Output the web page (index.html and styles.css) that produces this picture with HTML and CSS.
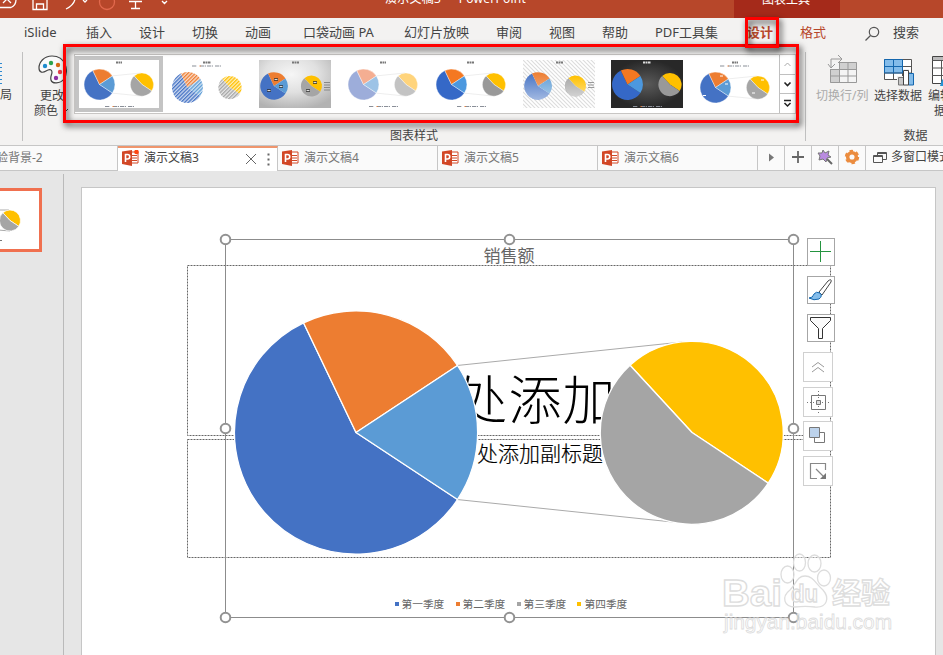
FILE: index.html
```html
<!DOCTYPE html>
<html lang="zh-CN">
<head>
<meta charset="utf-8">
<title>演示文稿3 - PowerPoint</title>
<link rel="stylesheet" href="styles.css">
</head>
<body>
<svg class="defs" width="0" height="0">
  <defs>
    <g id="main-pie">
      <path fill="var(--blue)" d="M0 0L101.500 67A121.600 121.600 0 1 1 -52.500 -109.700Z"/>
      <path fill="var(--orange)" d="M0 0L-52.500 -109.700A121.600 121.600 0 0 1 101.500 -67Z"/>
      <path fill="var(--sky)" d="M0 0L101.500 -67A121.600 121.600 0 0 1 101.500 67Z"/>
    </g>
    <g id="sub-pie">
      <path fill="var(--gold)" d="M0 0L-62 -67.200A91.500 91.500 0 0 1 76.200 50.600Z"/>
      <path fill="var(--gray)" d="M0 0L76.200 50.600A91.500 91.500 0 1 1 -62 -67.200Z"/>
    </g>
    <g id="pies">
      <use href="#main-pie" transform="translate(16.500 24.500) scale(.127)"/>
      <use href="#sub-pie" transform="translate(59 24.500) scale(.127)"/>
    </g>
    <g id="pair">
      <path d="M30 15.800L58 13M30 33.200L58 36" stroke="#ddd" stroke-width=".5"/>
      <use href="#pies" stroke="#fff" stroke-width="3"/>
    </g>
    <g id="keys" fill="none" stroke-width="1.200">
      <path d="M0 0h5M8 0h6M15 0h6M23 0h6" stroke="#8a8f98" stroke-dasharray="4 .7"/>
      <path d="M7.500 0h1.200" stroke="#ed7d31"/>
    </g>
    <radialGradient id="silver" cx=".45" cy=".3" r=".75"><stop offset="0" stop-color="#f6f6f6"/><stop offset=".5" stop-color="#e0e0e0"/><stop offset="1" stop-color="#b2b2b2"/></radialGradient>
    <radialGradient id="dark"><stop offset="0" stop-color="#5a5a5a"/><stop offset="1" stop-color="#282828"/></radialGradient>
    <linearGradient id="shine" x2="0" y2="1"><stop offset="0" stop-color="#fff" stop-opacity="0"/><stop offset="1" stop-color="#fff" stop-opacity=".5"/></linearGradient>
    <pattern id="stripes" width="2.600" height="2.600" patternUnits="userSpaceOnUse" patternTransform="rotate(45)"><path d="M0 0H1.300V2.600H0Z" fill="#fff"/></pattern>
    <mask id="striped" maskUnits="userSpaceOnUse" x="0" y="0" width="72" height="48"><path fill="url(#stripes)" d="M0 0h72v48H0z"/></mask>
    <pattern id="diag" width="4" height="4" patternUnits="userSpaceOnUse"><path d="M-1 -1L5 5M-1 3L1 5M3 -1L5 1" stroke="#ddd" stroke-width="1.200"/></pattern>
    <g id="ppt">
      <path d="M7 2h9v11H7z" fill="#fff" stroke="#d24726"/>
      <path d="M10 5.500h5M10 8h5M10 10.500h5" stroke="#d24726"/>
      <path d="M0 1.500L10 0v16L0 14z" fill="#d24726"/>
      <path d="M3.500 12V4.500h2a2 2 0 0 1 0 4.500h-2" fill="none" stroke="#fff" stroke-width="1.600"/>
    </g>
  </defs>
</svg>

<header class="titlebar">
  <svg class="quick" width="180" height="18" fill="none" stroke="#fff" stroke-width="1.300">
    <path d="M0 7.500h11q5-2 5-8M3 3l4-4 4 4M33 0v9.500h14V0M36.500 9V4h7v5M66 9q8-4 9-10M83 0l2 2 2-2M129 1.500h13M135.500 1.500v7M131 8.500h9M162 1l2.500 2.500L167 1"/>
    <circle cx="107" cy="2" r="7.500" stroke="#e2694d"/>
  </svg>
  <span class="doc-title">演示文稿3&nbsp; - &nbsp;PowerPoint</span>
  <span class="context">图表工具</span>
</header>

<nav class="tabs">
  <span>iSlide</span><span>插入</span><span>设计</span><span>切换</span><span>动画</span><span>口袋动画 PA</span><span>幻灯片放映</span><span>审阅</span><span>视图</span><span>帮助</span><span>PDF工具集</span><span class="current">设计</span><span class="accent">格式</span>
  <svg width="16" height="18" fill="none" stroke="#555" stroke-width="1.200"><circle cx="9" cy="7" r="4.700"/><path d="M5.500 10.500L.5 15.500"/></svg>
  <span>搜索</span>
</nav>

<section class="ribbon">
  <div class="group layout-group">
    <svg width="3" height="24" stroke="#2e8ad0"><path d="M0 1.500h2M0 5.500h2M0 9.500h2M0 13.500h2M0 17.500h2M0 21.500h2"/></svg>
    <span>局</span>
  </div>
  <div class="group styles-group">
    <div class="tools">
      <div class="recolor">
        <svg width="29" height="30" viewBox="0 0 29 30"><path d="M14 1C6 1 1 7 1 13c0 5 4 5 7 3s6-2 6 1c0 3-2 4-1 8 1 4 9 4 13-1 5-8 2-23-12-23z" fill="#fafafa" stroke="#444" stroke-width="1.200"/><circle cx="7" cy="11" r="2.200" fill="#1e8bcd"/><circle cx="13" cy="8" r="2.200" fill="#2da44e"/><circle cx="20" cy="10" r="2.200" fill="#d66b13"/><circle cx="22" cy="17" r="2.200" fill="#e8414b"/><circle cx="18" cy="23" r="2.200" fill="#8e2fa3"/></svg>
        <span>更改</span><span>颜色<svg class="caret" width="7" height="5"><path d="M1 1l2.500 2.500L6 1" fill="none" stroke="#444"/></svg></span>
      </div>
      <div class="gallery">
        <div class="item selected"><svg viewBox="0 0 72 48"><use href="#pair"/><path class="cap" d="M33 2.500h6"/><use href="#keys" x="22" y="46.500"/></svg></div>
        <div class="item"><svg viewBox="0 0 72 48">
          <g class="tint"><use href="#pies" y="3"/></g>
          <g mask="url(#striped)"><use href="#pies" y="3"/></g>
          <path class="cap" d="M32 2.500h8"/><use href="#keys" x="21" y="6"/></svg></div>
        <div class="item"><svg viewBox="0 0 72 48"><path fill="url(#silver)" d="M0 0h72v48H0z"/><use href="#main-pie" transform="translate(15 26) scale(.113)"/><use href="#sub-pie" transform="translate(52.500 26) scale(.115)"/><path class="cap" d="M33 2.500h7"/><path d="M15 19.500h4M20 26.500h4M8 30.500h4M54 22.500h4M47 30.500h4" stroke="#333" stroke-width="2.500"/><path d="M15.500 19.500h3M20.500 26.500h3M8.500 30.500h3M54.500 22.500h3M47.500 30.500h3" stroke="#ddd"/><path d="M65 22.500h6M65 25h6M65 27.500h6M65 30h6" stroke="#888"/></svg></div>
        <div class="item pale"><svg viewBox="0 0 72 48"><use href="#pair"/><path class="cap" d="M33 2.500h6"/><use href="#keys" x="22" y="46.500"/></svg></div>
        <div class="item vivid"><svg viewBox="0 0 72 48"><use href="#pair"/><path class="cap" d="M32 2.500h7"/><use href="#keys" x="22" y="46.500"/></svg></div>
        <div class="item"><svg viewBox="0 0 72 48"><path fill="url(#diag)" d="M0 0h72v48H0z"/><use href="#main-pie" transform="translate(15 26) scale(.113)"/><use href="#sub-pie" transform="translate(52.500 26) scale(.115)"/><circle cx="15" cy="26" r="13.800" fill="url(#shine)"/><circle cx="52.500" cy="26" r="10.500" fill="url(#shine)"/><path class="cap" d="M33 2.500h7"/><path d="M65 22.500h6M65 25h6M65 27.500h6" stroke="#999"/></svg></div>
        <div class="item vivid"><svg viewBox="0 0 72 48"><path fill="url(#dark)" d="M0 0h72v48H0z"/><use href="#pies"/><path class="cap light" d="M32 2.500h8"/><use href="#keys" x="22" y="46.500"/></svg></div>
        <div class="item"><svg viewBox="0 0 72 48"><use href="#pair" y="3"/><path class="cap" d="M33 2.500h6"/><use href="#keys" x="21" y="6"/><path d="M4 35.500h3M26 24h3M21 16h3M62 20h3M53 33h3" stroke="#fff"/></svg></div>
        <div class="scroller">
          <svg width="15" height="20"><path d="M4.500 11L7.500 8l3 3" stroke="#aaa"/></svg>
          <svg width="15" height="19"><path d="M4.500 7.500l3 3 3-3" stroke="#222" stroke-width="1.600"/></svg>
          <svg width="15" height="19"><path d="M4 6.500h7M4.500 9l3 3 3-3" stroke="#222" stroke-width="1.500"/></svg>
        </div>
      </div>
    </div>
    <div class="label">图表样式</div>
  </div>
  <div class="group data-group">
    <div class="data-tools">
      <div class="tool disabled"><svg width="36" height="32" viewBox="0 0 36 32" fill="none"><path d="M5 8h27v21H5z" fill="#f4f4f4"/><path d="M14 8h18v7H14zM5 15h9v14H5z" fill="#d0d0d0"/><path d="M14 8.500h17.500v20h-26V15M5.500 15.500h26M5.500 22h26M14.500 8.500v20M23 8.500v20" stroke="#999"/><path d="M6 13V5h10M3 10l3 4 4-4M13 1l4 4-4 4" stroke="#999"/></svg><span>切换行/列</span></div>
      <div class="tool"><svg width="32" height="32" viewBox="0 0 32 32"><path d="M1.500 5.500h27v20h-27z" fill="#fff" stroke="#555"/><path d="M1.500 5.500h18v13.500h-18z" fill="#83bcea"/><path d="M1.500 12.500h27M1.500 19h27M10.500 5v20M19.500 5v20" stroke="#555"/><path d="M1.500 5.500h18v13.500h-18zM1.500 12.500h18M10.500 5v14" stroke="#1467ae" fill="none"/><path d="M14 22h9v10h-9zM20 15h6v17h-6z" fill="#f1f0ef"/><path d="M15.500 23.500h5v7.500h-5z" fill="#c8c8c8" stroke="#777"/><path d="M25.500 19.500h5v11.500h-5z" fill="#83bcea" stroke="#1467ae"/><path d="M20.500 16.500h5v14.500h-5z" fill="#fff" stroke="#444"/></svg><span>选择数据</span></div>
      <div class="tool edit"><svg width="14" height="32" viewBox="0 0 14 32"><path d="M.5 2.500h14v27H.5z" fill="#fff" stroke="#444"/><path d="M1 3h13v3H1z" fill="#bbb"/><path d="M0 6.500h14M0 14h14M0 21.500h14M9.500 6v24" stroke="#555"/><path d="M8 32l2-6 4-4v10z" fill="#2494d5"/></svg><span>编辑数</span><span class="second">据</span></div>
    </div>
    <div class="label">数据</div>
  </div>
</section>

<div class="doctabs">
  <div class="doc first">验背景-2</div>
  <div class="doc active"><svg width="18" height="17"><use href="#ppt"/><circle cx="14.500" cy="2" r="2.300" fill="#ff4612"/></svg><span>演示文稿3</span><svg class="close" width="28" height="14" fill="none" stroke="#666"><path d="M1 2l10 10M11 2L1 12"/><path d="M23.500 1.500v12" stroke-width="2" stroke-dasharray="2 3"/></svg></div>
  <div class="doc"><svg width="18" height="17"><use href="#ppt"/></svg><span>演示文稿4</span></div>
  <div class="doc"><svg width="18" height="17"><use href="#ppt"/></svg><span>演示文稿5</span></div>
  <div class="doc"><svg width="18" height="17"><use href="#ppt"/></svg><span>演示文稿6</span></div>
  <div class="mini"><svg width="16" height="16"><path d="M6 4.500l5 4-5 4z" fill="#777"/></svg></div>
  <div class="mini"><svg width="16" height="16"><path d="M2 8h12M8 2v12" stroke="#666" stroke-width="1.800"/></svg></div>
  <div class="mini"><svg width="16" height="16"><path d="M6 1l2 3 4-2-1 4 3 2-4 1-1 4-3-3-4 1 1-4-2-3 4 0z" fill="#b98be0" stroke="#777"/><path d="M10 10l5 5" stroke="#666" stroke-width="2"/></svg></div>
  <div class="mini"><svg width="16" height="16"><circle cx="8" cy="8" r="4.300" fill="none" stroke="#eb8c3f" stroke-width="3.500"/><circle cx="8" cy="8" r="6.200" fill="none" stroke="#eb8c3f" stroke-width="2" stroke-dasharray="3.500 3"/></svg></div>
  <div class="multi"><svg width="15" height="14" fill="none" stroke="#555"><path d="M4.500 4V1.500h9v7H10M.5 4.500h9v7h-9zM1 5.500h8M5 2.500h8"/></svg><span>多窗口模式</span></div>
</div>

<main class="workspace">
  <aside class="side"><div class="slide-thumb"><svg width="39" height="58" viewBox="0 191 39 58"><path d="M-4 210l13 0M-2 230l12 1" stroke="#aaa"/><use href="#sub-pie" stroke="#fff" stroke-width="6" transform="translate(10 220.500) scale(.115)"/><path d="M0 240.500h2" stroke="#777"/></svg></div></aside>
  <div class="slide">
    <svg class="canvas" width="853" height="467" viewBox="82 188 853 467">
      <g fill="none" stroke="#666" stroke-dasharray="2 1"><path d="M187.500 265.500H830.500V435.500H187.500ZM187.500 439.500H830.500V557.500H187.500Z"/></g>
      <text class="headline" x="454.500" y="420">处添加</text>
      <text class="subline" x="477" y="461">处添加副标题</text>
      <path d="M457 365.500L682 342M457 499.500L682 523" stroke="#aaa"/>
      <g stroke="#fff" stroke-width="1.300" stroke-linejoin="round"><use href="#main-pie" x="356" y="432.500"/><use href="#sub-pie" x="692" y="432.500"/></g>
      <text class="chart-title" x="483.500" y="262">销售额</text>
      <g class="legend"><path fill="#4472c4" d="M395 602h4v4h-4z"/><path fill="#ed7d31" d="M456 602h4v4h-4z"/><path fill="#a5a5a5" d="M517 602h4v4h-4z"/><path fill="#ffc000" d="M577 602h4v4h-4z"/>
        <text x="401.500" y="608">第一季度</text><text x="462.500" y="608">第二季度</text><text x="523.500" y="608">第三季度</text><text x="584.500" y="608">第四季度</text></g>
      <path d="M225.500 239.500H793.500V617.500H225.500Z" fill="none" stroke="#8c8c8c"/>
      <g fill="#fff" stroke="#929292" stroke-width="2"><circle cx="225.500" cy="239.500" r="4.800"/><circle cx="509.500" cy="239.500" r="4.800"/><circle cx="793.500" cy="239.500" r="4.800"/><circle cx="225.500" cy="428.500" r="4.800"/><circle cx="793.500" cy="428.500" r="4.800"/><circle cx="225.500" cy="617.500" r="4.800"/><circle cx="509.500" cy="617.500" r="4.800"/><circle cx="793.500" cy="617.500" r="4.800"/></g>
      <g class="mark">
        <ellipse cx="787.500" cy="574.500" rx="6.500" ry="8.500"/><ellipse cx="799.500" cy="562.500" rx="6" ry="8.500"/><ellipse cx="814.500" cy="563.500" rx="6.500" ry="8.500"/><ellipse cx="824" cy="578" rx="6.500" ry="8"/>
        <path d="M805 576c-8 0-9 8-15 14-9 7-6 17 5 17 8-1 13-1 20 0 12 1 15-9 8-17-7-6-10-14-18-14z"/>
        <text x="722" y="606" class="brand" textLength="60" lengthAdjust="spacingAndGlyphs">Bai</text><text x="791" y="602" class="du" textLength="27" lengthAdjust="spacingAndGlyphs">du</text><text x="832" y="604" class="jy">经验</text><text x="724" y="629" class="url" textLength="168" lengthAdjust="spacingAndGlyphs">jingyan.baidu.com</text>
      </g>
    </svg>
    <div class="chart-tools">
      <svg width="28" height="28"><path d="M3 13.500h21M13.500 3v21" stroke="#259440"/></svg>
      <svg width="28" height="28"><path d="M12 16L21 5q4-3 3 1L15 19z" fill="#fff" stroke="#444"/><path d="M2 22q4 0 5-4 2-3 6-1 3 3-1 6-5 2-10-1z" fill="#83bcea" stroke="#1467ae"/></svg>
      <svg width="28" height="28"><path d="M3.500 3.500h20v3l-8 8v10h-4v-10l-8-8z" fill="#fafafa" stroke="#333"/></svg>
    </div>
    <div class="float-tools">
      <svg width="30" height="30"><path d="M9 15l6-4.500 6 4.500M9 20l6-4.500 6 4.500" stroke="#999"/></svg>
      <svg width="30" height="30"><path d="M8.500 8.500h14v14h-14z" stroke="#777"/><path d="M15.500 4v24M4 15.500h24" stroke="#777" stroke-dasharray="1 2"/><path d="M13.500 13.500h4v4h-4z" fill="#ddd" stroke="#777"/></svg>
      <svg width="30" height="30"><path d="M17 11.500h4.500v10h-10V17" stroke="#777"/><path d="M6.500 6.500h10v10h-10z" fill="#bdd3ec" stroke="#777"/></svg>
      <svg width="30" height="30"><path d="M14 22.500H7.500v-15h15V14M13 13l8 8" stroke="#888" stroke-width="1.200"/><path d="M23 17v6h-6z" fill="#777"/></svg>
    </div>
  </div>
</main>
<div class="callout gallery-callout"></div>
<div class="callout tab-callout"></div>
</body>
</html>
```

FILE: styles.css
```css
:root {
  --blue: #4472c4;
  --orange: #ed7d31;
  --sky: #5b9bd5;
  --gold: #ffc000;
  --gray: #a5a5a5;
}
* { box-sizing: border-box; }
body {
  margin: 0;
  width: 943px;
  height: 655px;
  overflow: hidden;
  position: relative;
  background: #f3f2f1;
  color: #444;
  font: 12px/16px "Noto Sans", "Noto Sans CJK SC", sans-serif;
  white-space: nowrap;
}
svg { display: block; flex: none; }
.defs { position: absolute; }

.titlebar {
  display: grid;
  grid-template-columns: 385px 349px 106px;
  height: 18px;
  overflow: hidden;
  background: #b7472a;
  color: #fff;
}
.doc-title, .context { line-height: 14px; margin-top: -8px; }
.doc-title { letter-spacing: .25px; }
.context { margin: 0; background: #a52a1a; padding-left: 28px; line-height: 0; }

.tabs {
  display: grid;
  grid-template-columns: 62px 53px 53px 53px 58px 101px 92px 53px 53px 53px 92px 53px 65px 28px 40px;
  height: 28px;
  padding-left: 24px;
  font-size: 13px;
  line-height: 28px;
}
.tabs svg { margin-top: 7px; }
.accent, .current { color: #b7472a; }
.current { font-weight: 600; }

.ribbon { display: flex; height: 99px; }
.group { height: 89px; margin-top: 6px; border-right: 1px solid #c0c0c0; }
.layout-group { width: 23px; padding-top: 10px; }
.layout-group span { display: block; margin-top: 1px; }
.styles-group { width: 783px; }
.tools { display: flex; height: 76px; }
.recolor { width: 51px; padding: 3px 0 0 11px; line-height: 15px; }
.recolor > svg { margin: 0 0 3px 4px; }
.recolor span { display: block; }
.recolor span:first-of-type { padding-left: 6px; }
.caret { display: inline-block; margin: 0 0 2px 4px; }
.gallery {
  display: flex;
  width: 722px;
  height: 60px;
  margin-top: 2px;
  background: #fff;
  border: 1px solid #c8c6c4;
}
.item { width: 88px; height: 56px; margin-top: 1px; padding: 4px 8px; }
.item svg { width: 72px; height: 48px; }
.selected { border: 4px solid #c4c4c4; padding: 0 4px; }
.cap { stroke: #777; stroke-width: 2; stroke-dasharray: 2 .5; }
.light { stroke: #ddd; }
.tint { opacity: .25; }
.pale { --blue: #9dadda; --orange: #f4ae92; --sky: #9dc3e6; --gold: #ffd47c; --gray: #c3c3c3; }
.vivid { --blue: #3568c7; --orange: #f47822; --sky: #4c98df; --gray: #999; }
.scroller { width: 16px; border-left: 1px solid #c0c0c0; }
.scroller svg { fill: none; border-bottom: 1px solid #c0c0c0; }
.scroller svg:last-child { border: 0; }
.label { text-align: center; line-height: 16px; }
.data-group { width: 137px; border: 0; }
.data-tools { display: grid; grid-template-columns: 58px 54px 40px; padding-left: 10px; height: 76px; }
.tool { line-height: 15px; }
.tool svg { margin: 2px 0 2px 9px; }
.tool.edit svg { margin-left: 4px; }
.tool span { display: block; }
.tool .second { padding-left: 6px; }
.disabled { color: #aaa; }
.data-group .label { padding-left: 82px; }

.doctabs { display: flex; height: 26px; border: solid #c6c6c6; border-width: 1px 0; background: #fafafa; line-height: 22px; color: #777; }
.doctabs > div { flex: none; }
.doc { display: flex; width: 160px; padding: 1px 0 0 4px; border-right: 1px solid #c6c6c6; }
.doc > svg:first-child { margin-top: 3px; }
.doc span { margin-left: 4px; }
.doc.first { width: 118px; padding-left: 0; text-indent: -4px; }
.doc.active { background: #fff; color: #444; border-top: 2px solid #ef956d; padding-top: 0; margin-bottom: -1px; line-height: 20px; }
.doc.active > svg:first-child { margin-top: 2px; }
.close { margin: 4px 0 0 46px; }
.mini { width: 27px; padding: 3px 5px; border-right: 1px solid #c6c6c6; }
.multi { display: flex; gap: 3px; padding-left: 7px; color: #444; }
.multi svg { margin-top: 5px; }

.workspace { display: flex; height: 484px; background: #e6e6e6; }
.side { width: 64px; margin-top: 3px; border-right: 1px solid #bababa; padding-top: 14px; }
.slide-thumb { width: 42px; height: 64px; background: #fff; border: 3px solid #f0704f; border-left: 0; }
.slide { position: relative; width: 855px; height: 468px; margin: 16px 0 0 17px; background: #fff; border: 1px solid #c6c6c6; border-bottom: 0; }
.headline { font: 300 53px "Noto Sans CJK SC", sans-serif; letter-spacing: 1px; fill: #000; }
.subline { font: 300 21px "Noto Sans CJK SC", sans-serif; fill: #000; stroke: #000; stroke-width: .2px; }
.chart-title { font: 17px "Noto Sans CJK SC", sans-serif; fill: #666; }
.legend { font: 10.7px "Noto Sans CJK SC", sans-serif; fill: #666; }
.mark { fill: #fff; fill-opacity: .4; stroke: #ddd; stroke-width: 1.3; }
.brand { font: bold 36px "Liberation Sans", sans-serif; }
.du { font: bold 23px "Liberation Sans", sans-serif; }
.jy { font: bold 29px "Noto Sans CJK SC", sans-serif; }
.url { font: 20px "Liberation Sans", sans-serif; stroke-width: .8; }
.chart-tools, .float-tools { position: absolute; display: grid; }
.chart-tools { left: 725px; top: 50px; gap: 10px; }
.float-tools { left: 721px; top: 164px; gap: 4.67px; }
.chart-tools svg, .float-tools svg { background: #fff; fill: none; outline: 1px solid #a6a6a6; outline-offset: -1px; }
.float-tools svg { outline-color: #d0d0d0; }

.callout { position: absolute; border: 3px solid #f00; filter: drop-shadow(2px 3px 3px rgba(0, 0, 0, .8)); }
.gallery-callout { left: 63px; top: 44px; width: 736px; height: 79px; }
.tab-callout { left: 745px; top: 17px; width: 34px; height: 31px; }
```
